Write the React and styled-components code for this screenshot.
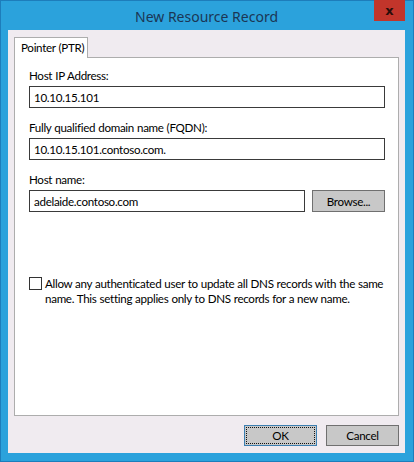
import React from "react";
import styled, { createGlobalStyle } from "styled-components";

const GlobalStyle = createGlobalStyle`
  html, body {
    margin: 0;
    padding: 0;
    background: #2ba2dc;
  }
  * {
    box-sizing: border-box;
  }
`;

const Window = styled.div`
  width: 414px;
  height: 462px;
  display: flex;
  flex-direction: column;
  background: #2ba2dc;
  border: 1px solid #1d7dbb;
  padding: 0 8px 8px 7px;
  font-family: Lato, "Liberation Sans", sans-serif;
  font-size: 11.6px;
  letter-spacing: -0.3px;
  word-spacing: 0.3px;
  color: #000;
`;

const TitleBar = styled.div`
  position: relative;
  height: 30px;
  display: flex;
  align-items: center;
  justify-content: center;
`;

const Title = styled.div`
  font-family: "Noto Sans", sans-serif;
  font-size: 14px;
  letter-spacing: 0;
  word-spacing: 0;
  color: #1b3655;
  padding-top: 1px;
`;

const CloseButton = styled.div`
  position: absolute;
  top: -1px;
  right: 0;
  width: 31px;
  height: 21px;
  background: #c2352b;
  display: flex;
  align-items: center;
  justify-content: center;
  color: #2a0d0a;
  font-family: "DejaVu Sans", sans-serif;
  font-weight: bold;
  font-size: 13px;
  letter-spacing: 0;
`;

const Client = styled.div`
  flex: 1;
  display: flex;
  flex-direction: column;
  background: #f0ebf0;
  padding: 7px 6px 7px 6px;
`;

const TabStrip = styled.div`
  display: flex;
  height: 20px;
  position: relative;
  z-index: 1;
`;

const Tab = styled.div`
  height: 21px;
  background: #fff;
  border: 1px solid #adadad;
  border-bottom: none;
  padding: 3px 3px 0 6px;
  white-space: nowrap;
`;

const TabPanel = styled.div`
  height: 359px;
  background: #fff;
  border: 1px solid #adadad;
  display: flex;
  flex-direction: column;
  padding: 10px 13px 0 14px;
`;

const Label = styled.div`
  line-height: 15px;
  margin-top: ${({ $gap }) => $gap || 0}px;
`;

const FieldRow = styled.div`
  display: flex;
  align-items: center;
  gap: 7px;
  margin-top: 3px;
`;

const TextInput = styled.div`
  flex: 1;
  height: 22px;
  border: 1px solid #3a3a3a;
  background: #fff;
  padding: 0 4px;
  display: flex;
  align-items: center;
`;

const Button = styled.div`
  width: ${({ $width }) => $width}px;
  height: ${({ $height }) => $height}px;
  background: #c8c8c8;
  border: 1px solid ${({ $default }) => ($default ? "#3c7fb1" : "#707070")};
  display: flex;
  align-items: center;
  justify-content: center;
  position: relative;
  &::after {
    content: "";
    display: ${({ $default }) => ($default ? "block" : "none")};
    position: absolute;
    inset: 1px;
    border: 1px dotted #111;
  }
`;

const CheckRow = styled.div`
  display: flex;
  align-items: flex-start;
  gap: 3px;
  margin-top: 64px;
`;

const Checkbox = styled.div`
  flex: 0 0 13px;
  height: 13px;
  border: 1px solid #333;
  background: #fff;
  margin-top: 1px;
`;

const CheckText = styled.div`
  line-height: 15px;
`;

const ButtonRow = styled.div`
  display: flex;
  justify-content: flex-end;
  gap: 9px;
  padding-top: 9px;
`;

export default function App() {
  return (
    <>
      <GlobalStyle />
      <Window>
        <TitleBar>
          <Title>New Resource Record</Title>
          <CloseButton>x</CloseButton>
        </TitleBar>
        <Client>
          <TabStrip>
            <Tab>Pointer (PTR)</Tab>
          </TabStrip>
          <TabPanel>
            <Label>Host IP Address:</Label>
            <FieldRow>
              <TextInput>10.10.15.101</TextInput>
            </FieldRow>
            <Label $gap={12}>Fully qualified domain name (FQDN):</Label>
            <FieldRow>
              <TextInput>10.10.15.101.contoso.com.</TextInput>
            </FieldRow>
            <Label $gap={12}>Host name:</Label>
            <FieldRow>
              <TextInput>adelaide.contoso.com</TextInput>
              <Button $width={73} $height={22}>Browse...</Button>
            </FieldRow>
            <CheckRow>
              <Checkbox />
              <CheckText>
                Allow any authenticated user to update all DNS records with the same
                name. This setting applies only to DNS records for a new name.
              </CheckText>
            </CheckRow>
          </TabPanel>
          <ButtonRow>
            <Button $width={73} $height={21} $default>OK</Button>
            <Button $width={73} $height={21}>Cancel</Button>
          </ButtonRow>
        </Client>
      </Window>
    </>
  );
}
